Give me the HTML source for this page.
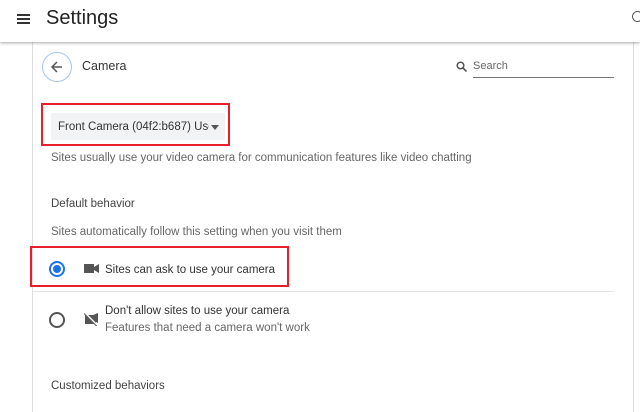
<!DOCTYPE html>
<html><head><style>
body{margin:0;width:640px;height:401px;overflow:hidden;background:#fff;font-family:"Liberation Sans",sans-serif;position:relative}
.a{position:absolute;white-space:nowrap}
.hdr{position:absolute;left:0;top:0;width:640px;height:42px;background:#fff;box-shadow:0 1px 3px rgba(0,0,0,.35);z-index:2}
.card{position:absolute;left:32px;top:42px;width:600px;height:370px;border-left:1px solid #ddd;border-right:1px solid #ddd}
.t{font-size:11.5px;color:#333}
.g{font-size:11.5px;color:#666}
</style></head><body>
<div class="hdr">
<div class="a" style="left:17px;top:14px;width:13px;height:2px;background:#333;box-shadow:0 4px 0 #333,0 8px 0 #333"></div>
<div class="a" style="left:46px;top:7px;font-size:20px;color:#222">Settings</div>
<div class="a" style="left:632px;top:11px;width:9px;height:9px;border:1.5px solid #555;border-radius:50%"></div>
</div>
<div class="card"></div>
<div class="a" style="left:42px;top:52px;width:28px;height:28px;border:1.5px solid #a8c4ec;border-radius:50%"></div>
<svg class="a" style="left:50px;top:60px" width="14" height="14" viewBox="0 0 14 14"><path d="M12 7H2M7 2L2 7l5 5" stroke="#555" stroke-width="1.5" fill="none"/></svg>
<div class="a t" style="left:82px;top:59px;font-size:12.5px">Camera</div>
<svg class="a" style="left:456px;top:61px" width="11" height="11" viewBox="0 0 11 11"><circle cx="4.5" cy="4.5" r="3.3" stroke="#555" stroke-width="1.5" fill="none"/><path d="M7 7l3.5 3.5" stroke="#555" stroke-width="1.6"/></svg>
<div class="a g" style="left:473px;top:60px;font-size:11px">Search</div>
<div class="a" style="left:473px;top:77px;width:141px;height:1px;background:#777"></div>
<div class="a" style="left:41px;top:103px;width:185px;height:39px;border:2px solid #e5202a"></div>
<div class="a" style="left:51px;top:113px;width:174px;height:27px;background:#f1f3f4"></div>
<div class="a t" style="left:58px;top:121px;width:151px;overflow:hidden">Front Camera (04f2:b687) User</div>
<div class="a" style="left:211px;top:125px;border:4px solid transparent;border-top:5px solid #555"></div>
<div class="a g" style="left:51px;top:152px">Sites usually use your video camera for communication features like video chatting</div>
<div class="a t" style="left:51px;top:198px;color:#444">Default behavior</div>
<div class="a g" style="left:51px;top:226px">Sites automatically follow this setting when you visit them</div>
<div class="a" style="left:30px;top:246px;width:255px;height:37px;border:2px solid #e5202a"></div>
<div class="a" style="left:49px;top:261px;width:12px;height:12px;border:2px solid #1a73e8;border-radius:50%"></div>
<div class="a" style="left:53px;top:265px;width:8px;height:8px;background:#1a73e8;border-radius:50%"></div>
<svg class="a" style="left:84px;top:263px" width="15" height="11" viewBox="0 0 15 11"><rect x="0" y="1" width="10" height="9" fill="#555"/><path d="M10 4L15 1v9l-5-3z" fill="#555"/></svg>
<div class="a t" style="left:105px;top:264px">Sites can ask to use your camera</div>
<div class="a" style="left:33px;top:291px;width:581px;height:1px;background:#e4e4e4"></div>
<div class="a" style="left:49px;top:312px;width:12px;height:12px;border:2px solid #555;border-radius:50%"></div>
<svg class="a" style="left:84px;top:312px" width="15" height="14" viewBox="0 0 15 14"><path d="M1 3h8l5 -2v10l-2-1v2z" fill="#555"/><path d="M1 3v9h9z" fill="#555"/><path d="M1 1l12 12" stroke="#fff" stroke-width="1.6"/><path d="M0 1.5l13 13" stroke="#555" stroke-width="1"/></svg>
<div class="a t" style="left:105px;top:305px">Don't allow sites to use your camera</div>
<div class="a g" style="left:105px;top:322px">Features that need a camera won't work</div>
<div class="a t" style="left:51px;top:380px;color:#444">Customized behaviors</div>
</body></html>
